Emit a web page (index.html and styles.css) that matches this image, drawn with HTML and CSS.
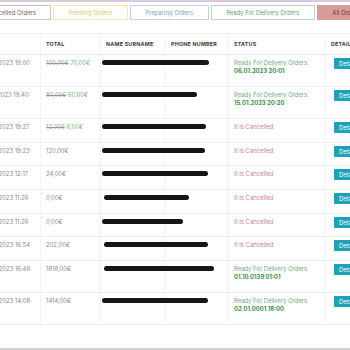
FILE: index.html
```html
<!DOCTYPE html>
<html lang="en">
<head>
    <meta charset="UTF-8">
    <meta name="viewport" content="width=device-width, initial-scale=1.0">
    <title>Orders</title>
    <link rel="stylesheet" href="styles.css">
</head>
<body>
    <div class="topline"></div>
    <nav class="tabs">
        <a href="#" class="tab tab-cancelled">Cancelled Orders</a>
        <a href="#" class="tab tab-pending">Pending Orders</a>
        <a href="#" class="tab tab-preparing">Preparing Orders</a>
        <a href="#" class="tab tab-ready">Ready For Delivery Orders</a>
        <a href="#" class="tab tab-all">All Orders</a>
    </nav>
    <div class="table-wrap">
        <table class="orders">
            <colgroup>
                <col class="col-date">
                <col class="col-total">
                <col class="col-name">
                <col class="col-phone">
                <col class="col-status">
                <col class="col-detail">
            </colgroup>
            <thead>
                <tr>
                    <th>DATE</th>
                    <th>TOTAL</th>
                    <th>NAME SURNAME</th>
                    <th>PHONE NUMBER</th>
                    <th>STATUS</th>
                    <th>DETAIL</th>
                </tr>
            </thead>
            <tbody>
                <tr class="tall">
                    <td>06.01.2023 19:00</td>
                    <td><s class="old-price">100,00€</s> <span class="new-price">70,00€</span></td>
                    <td class="name"><span class="redact" style="width: 107px;"></span></td>
                    <td></td>
                    <td class="ready">Ready For Delivery Orders<br><b>06.01.2023 20:01</b></td>
                    <td><a href="#" class="btn-detail">Detail</a></td>
                </tr>
                <tr class="tall">
                    <td>15.01.2023 19:40</td>
                    <td><s class="old-price">80,00€</s> <span class="new-price">60,60€</span></td>
                    <td class="name"><span class="redact" style="width: 95px;"></span></td>
                    <td></td>
                    <td class="ready">Ready For Delivery Orders<br><b>15.01.2023 20:20</b></td>
                    <td><a href="#" class="btn-detail">Detail</a></td>
                </tr>
                <tr>
                    <td>06.01.2023 19:27</td>
                    <td><s class="old-price">12,00€</s> <span class="new-price">6,00€</span></td>
                    <td class="name"><span class="redact" style="width: 104px;"></span></td>
                    <td></td>
                    <td class="cancelled">It Is Cancelled</td>
                    <td><a href="#" class="btn-detail">Detail</a></td>
                </tr>
                <tr>
                    <td>06.01.2023 19:23</td>
                    <td>120,00€</td>
                    <td class="name"><span class="redact" style="width: 103px;"></span></td>
                    <td></td>
                    <td class="cancelled">It Is Cancelled</td>
                    <td><a href="#" class="btn-detail">Detail</a></td>
                </tr>
                <tr>
                    <td>06.01.2023 12:17</td>
                    <td>24,00€</td>
                    <td class="name"><span class="redact" style="width: 106px;"></span></td>
                    <td></td>
                    <td class="cancelled">It Is Cancelled</td>
                    <td><a href="#" class="btn-detail">Detail</a></td>
                </tr>
                <tr>
                    <td>05.01.2023 11:26</td>
                    <td>0,00€</td>
                    <td class="name"><span class="redact shifted" style="width: 85px;"></span></td>
                    <td></td>
                    <td class="cancelled">It Is Cancelled</td>
                    <td><a href="#" class="btn-detail">Detail</a></td>
                </tr>
                <tr>
                    <td>05.01.2023 11:26</td>
                    <td>0,00€</td>
                    <td class="name"><span class="redact" style="width: 81px;"></span></td>
                    <td></td>
                    <td class="cancelled">It Is Cancelled</td>
                    <td><a href="#" class="btn-detail">Detail</a></td>
                </tr>
                <tr>
                    <td>04.01.2023 16:54</td>
                    <td>202,00€</td>
                    <td class="name"><span class="redact shifted" style="width: 104px;"></span></td>
                    <td></td>
                    <td class="cancelled">It Is Cancelled</td>
                    <td><a href="#" class="btn-detail">Detail</a></td>
                </tr>
                <tr class="tall">
                    <td>04.01.2023 16:46</td>
                    <td>1818,00€</td>
                    <td class="name"><span class="redact shifted" style="width: 110px;"></span></td>
                    <td></td>
                    <td class="ready">Ready For Delivery Orders<br><b>01.10.0139 01:01</b></td>
                    <td><a href="#" class="btn-detail">Detail</a></td>
                </tr>
                <tr class="tall">
                    <td>03.01.2023 14:08</td>
                    <td>1414,00€</td>
                    <td class="name"><span class="redact" style="width: 106px;"></span></td>
                    <td></td>
                    <td class="ready">Ready For Delivery Orders<br><b>02.01.0001 18:00</b></td>
                    <td><a href="#" class="btn-detail">Detail</a></td>
                </tr>
            </tbody>
        </table>
    </div>
    <div class="bottom-bar"></div>
</body>
</html>
```

FILE: styles.css
```css
html, body {
    height: 100%;
}
body {
    margin: 0;
    padding: 0;
    background-color: #fff;
    font-family: Inter, "Noto Sans", sans-serif;
    font-size: 5.9px;
    color: #8a8a8a;
    overflow: hidden;
    display: flex;
    flex-direction: column;
}
.topline {
    height: 2px;
    background-color: #d8c9de;
}
.tabs {
    display: flex;
    gap: 2px;
    margin: 3px 0 0 -28px;
}
.tab {
    flex: none;
    height: 13px;
    line-height: 13px;
    padding: 0 14.5px;
    border: 1px solid #ddd;
    text-decoration: none;
    white-space: nowrap;
}
.tab-cancelled {
    border-color: #d9bfcc;
    color: #7d5b6b;
}
.tab-pending {
    border-color: #efecb8;
    color: #d7c86b;
}
.tab-preparing {
    border-color: #bcd5dc;
    color: #76a8b8;
}
.tab-ready {
    border-color: #bdd4c1;
    color: #6e9c77;
}
.tab-all {
    background-color: #d69c98;
    border-color: #d69c98;
    color: #6f3838;
}
.table-wrap {
    flex: 1;
    margin-top: 13px;
}
.orders {
    margin-left: -24px;
    width: 414px;
    table-layout: fixed;
    border-collapse: collapse;
}
.col-date { width: 64px; }
.col-total { width: 60px; }
.col-name { width: 65px; }
.col-phone { width: 63px; }
.col-status { width: 97px; }
.col-detail { width: 65px; }
.orders th {
    height: 20px;
    padding: 0 5px;
    text-align: left;
    font-weight: 700;
    font-size: 5.3px;
    letter-spacing: 0.25px;
    color: #3c3c3c;
    border-top: 1px solid #f0f0f0;
    border-bottom: 1px solid #e8e8e8;
    border-left: 1px solid #f3f3f3;
}
.orders td {
    padding: 4px 5px 0;
    line-height: 8px;
    vertical-align: top;
    white-space: nowrap;
    border-bottom: 1px solid #eee;
    border-left: 1px solid #f3f3f3;
}
.orders tbody tr {
    height: 23.7px;
}
.orders tbody tr.tall {
    height: 32px;
}
.old-price {
    color: #9a9a9a;
}
.new-price {
    color: #6fb27d;
}
.orders td.name {
    padding-left: 1px;
}
.redact {
    position: relative;
    z-index: 1;
    display: block;
    height: 5px;
    margin-top: 1px;
    border-radius: 3px;
    background-color: #161616;
}
.redact.shifted {
    margin-left: 2px;
}
.ready {
    color: #74a87e;
}
.ready b {
    color: #3f8d50;
    font-weight: 700;
}
.cancelled {
    color: #c77f8b;
}
.btn-detail {
    display: inline-block;
    margin: -1px 0 0 3px;
    padding: 0 5px;
    height: 11px;
    line-height: 11px;
    background-color: #1fa2b6;
    color: #fff;
    text-decoration: none;
    border-radius: 1px;
}
.bottom-bar {
    height: 2px;
    background-color: #d2d2d2;
}
```
